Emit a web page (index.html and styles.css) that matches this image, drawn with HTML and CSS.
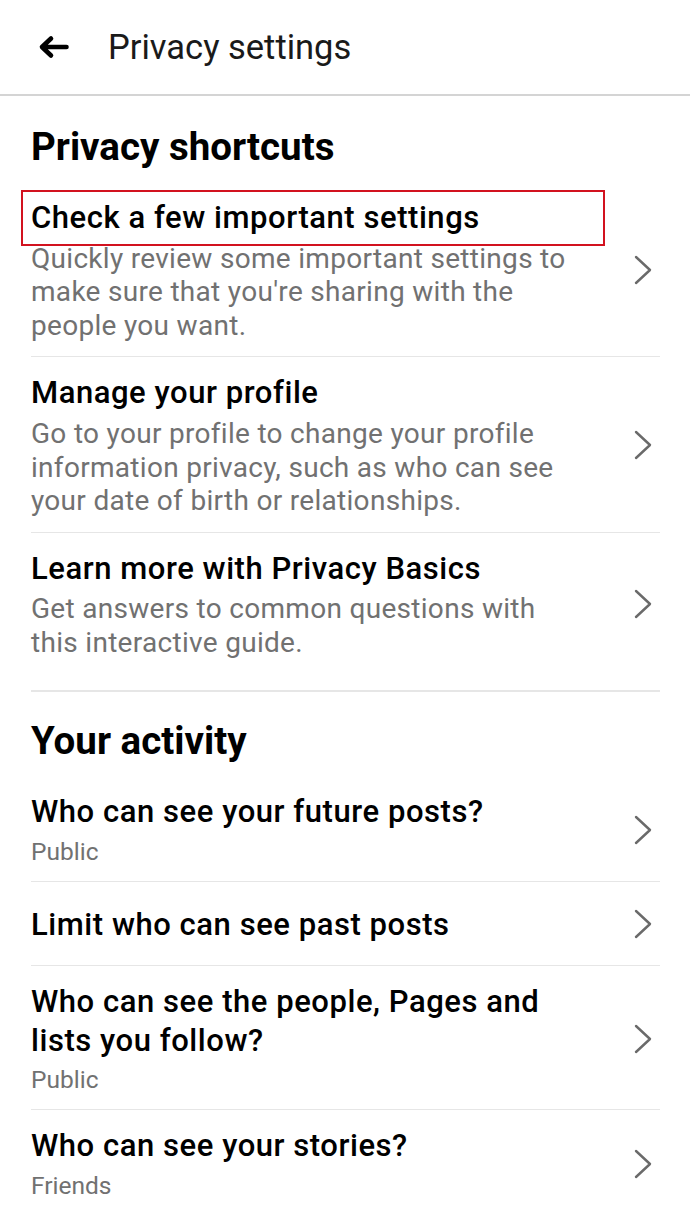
FILE: index.html
```
<!DOCTYPE html>
<html lang="en">
<head>
<meta charset="utf-8">
<title>Privacy settings</title>
<link rel="stylesheet" href="styles.css">
</head>
<body>
<header class="topbar">
  <svg class="back" viewBox="0 0 31 24" aria-hidden="true"><path d="M28.5 12H4M13 3.5L4 12l9 8.5" fill="none" stroke="#000" stroke-width="4.6" stroke-linecap="round" stroke-linejoin="round"/></svg>
  <span class="topbar-title">Privacy settings</span>
</header>

<section class="section">
  <h2 class="section-title">Privacy shortcuts</h2>
  <div class="row">
    <div class="text">
      <div class="title marked">Check a few important settings</div>
      <div class="desc">Quickly review some important settings to make sure that you're sharing with the people you want.</div>
    </div>
    <svg class="chev" viewBox="0 0 18 30" aria-hidden="true"><polyline points="2,2 16,15 2,28" /></svg>
  </div>
  <div class="row">
    <div class="text">
      <div class="title">Manage your profile</div>
      <div class="desc">Go to your profile to change your profile information privacy, such as who can see your date of birth or relationships.</div>
    </div>
    <svg class="chev" viewBox="0 0 18 30" aria-hidden="true"><polyline points="2,2 16,15 2,28" /></svg>
  </div>
  <div class="row">
    <div class="text">
      <div class="title">Learn more with Privacy Basics</div>
      <div class="desc">Get answers to common questions with this interactive guide.</div>
    </div>
    <svg class="chev" viewBox="0 0 18 30" aria-hidden="true"><polyline points="2,2 16,15 2,28" /></svg>
  </div>
</section>

<section class="section last">
  <h2 class="section-title">Your activity</h2>
  <div class="row">
    <div class="text">
      <div class="title">Who can see your future posts?</div>
      <div class="sub">Public</div>
    </div>
    <svg class="chev" viewBox="0 0 18 30" aria-hidden="true"><polyline points="2,2 16,15 2,28" /></svg>
  </div>
  <div class="row">
    <div class="text">
      <div class="title">Limit who can see past posts</div>
    </div>
    <svg class="chev" viewBox="0 0 18 30" aria-hidden="true"><polyline points="2,2 16,15 2,28" /></svg>
  </div>
  <div class="row">
    <div class="text">
      <div class="title">Who can see the people, Pages and lists you follow?</div>
      <div class="sub">Public</div>
    </div>
    <svg class="chev" viewBox="0 0 18 30" aria-hidden="true"><polyline points="2,2 16,15 2,28" /></svg>
  </div>
  <div class="row">
    <div class="text">
      <div class="title">Who can see your stories?</div>
      <div class="sub">Friends</div>
    </div>
    <svg class="chev" viewBox="0 0 18 30" aria-hidden="true"><polyline points="2,2 16,15 2,28" /></svg>
  </div>
</section>
</body>
</html>
```
FILE: styles.css
```
body {
  margin: 0;
  background: #fff;
  color: #050505;
  font-family: Roboto, "Liberation Sans", Arial, sans-serif;
}

.topbar {
  height: 94px;
  display: flex;
  align-items: center;
  padding-left: 38px;
  border-bottom: 2px solid #d4d4d4;
}

.back {
  width: 31px;
  height: 24px;
  margin-right: 39px;
  flex: none;
}

.topbar-title {
  font-size: 34.5px;
  font-weight: 400;
  color: #1a1a1a;
}

.section {
  margin: 0 30px 0 31px;
  padding-bottom: 17px;
  border-bottom: 2px solid #e6e6e6;
}

.section.last {
  border-bottom: none;
}

.section-title {
  margin: 27px 0 11px;
  font-size: 38.5px;
  font-weight: 700;
  line-height: 48px;
  color: #000;
}

.section + .section .section-title {
  margin-top: 25px;
}

.row {
  display: flex;
  align-items: center;
  justify-content: space-between;
  min-height: 84px;
  box-sizing: border-box;
  padding: 16px 0 14px;
  border-bottom: 1.5px solid #e6e6e6;
}

.row:last-child {
  border-bottom: none;
}

.text {
  width: 540px;
}

.title {
  font-size: 31px;
  font-weight: 500;
  line-height: 39px;
  letter-spacing: 0.55px;
  color: #000;
}

.title.marked {
  position: relative;
}

.title.marked::after {
  content: "";
  position: absolute;
  left: -10px;
  top: -8px;
  bottom: -9px;
  width: 584px;
  box-sizing: border-box;
  border: 2px solid #d2121f;
}

.desc {
  margin-top: 4.75px;
  font-size: 28px;
  line-height: 33.5px;
  letter-spacing: 0.3px;
  color: #717171;
}

.sub {
  margin-top: 3.5px;
  font-size: 24.5px;
  line-height: 33px;
  color: #717171;
}

.row:has(.sub) {
  padding-bottom: 13px;
}

.chev {
  width: 18px;
  height: 30px;
  margin-right: 8px;
  flex: none;
  fill: none;
  stroke: #6a6a6a;
  stroke-width: 2.4;
  stroke-linecap: round;
  stroke-linejoin: round;
}
```
